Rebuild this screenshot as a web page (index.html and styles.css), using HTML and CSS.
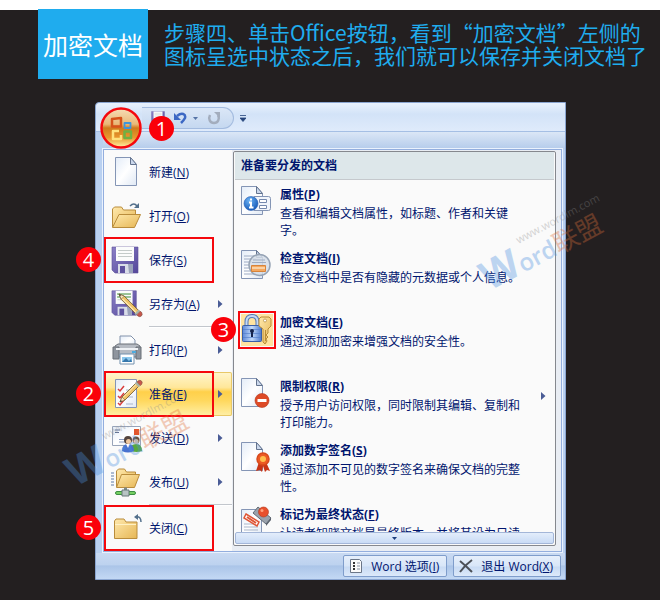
FILE: index.html
```html
<!DOCTYPE html>
<html lang="zh-CN">
<head>
    <meta charset="UTF-8">
    <meta name="viewport" content="width=device-width, initial-scale=1.0">
    <title>加密文档</title>
    <link rel="stylesheet" href="styles.css">
</head>

<body>
<!-- shared icon shapes -->
<svg class="defs" aria-hidden="true">
    <defs>
        <linearGradient id="paper" x1="0" y1="0" x2="1" y2="1">
            <stop offset="0" stop-color="#e3ecf8"/>
            <stop offset=".5" stop-color="#fff"/>
            <stop offset="1" stop-color="#dfe8f4"/>
        </linearGradient>
        <linearGradient id="folder" x1="0" y1="0" x2="1" y2="1">
            <stop offset="0" stop-color="#ffe9ad"/>
            <stop offset="1" stop-color="#e6b655"/>
        </linearGradient>
        <linearGradient id="purple" x1="0" y1="0" x2="1" y2="1">
            <stop offset="0" stop-color="#8b80c6"/>
            <stop offset="1" stop-color="#54479a"/>
        </linearGradient>
        <linearGradient id="lock" x1="0" y1="0" x2="1" y2="0">
            <stop offset="0" stop-color="#5c88d8"/>
            <stop offset=".5" stop-color="#c3dafa"/>
            <stop offset="1" stop-color="#4b78cc"/>
        </linearGradient>
        <linearGradient id="orb" x1="0" y1="0" x2="0" y2="1">
            <stop offset="0" stop-color="#f6dcb4"/>
            <stop offset=".4" stop-color="#e9b878"/>
            <stop offset=".5" stop-color="#cf7a1c"/>
            <stop offset=".75" stop-color="#e8962c"/>
            <stop offset="1" stop-color="#fff0a0"/>
        </linearGradient>
        <radialGradient id="info" cx=".4" cy=".3" r=".8">
            <stop offset="0" stop-color="#6db4f5"/>
            <stop offset="1" stop-color="#0b4eb0"/>
        </radialGradient>
        <symbol id="sheet" viewBox="0 0 32 32">
            <path d="M4.500 1.500h15l6 7v21h-21z" fill="url(#paper)" stroke="#8495b5"/>
            <path d="M19.500 1.500v7h6z" fill="#cbd8ec" stroke="#64748f" stroke-linejoin="round"/>
        </symbol>
        <symbol id="floppy" viewBox="0 0 32 32">
            <path d="M1 3h26v26H4l-3-3z" fill="url(#purple)" stroke="#5a4f98" stroke-width=".6"/>
            <path d="M5 3h18v14H5z" fill="#fbfcfb"/>
            <path d="M7 6.500h14M7 9.500h14M7 12.500h14" stroke="#c4cbc9"/>
            <path d="M7 20h15v9H7z" fill="#d9dde8"/>
            <path d="M9 22h5v7H9z" fill="#5e529f"/>
            <path d="M17 20h5v9h-4z" fill="#9aa2ba"/>
        </symbol>
        <symbol id="pencil" viewBox="0 0 24 24">
            <path d="M1 23l2-5L17.500 3.500l3 3L6 21z" fill="#f0c468" stroke="#6e5428" stroke-width=".8"/>
            <path d="M4 18.500L18 4.500" stroke="#fff0c0"/>
            <path d="M1 23l2-5 3 3z" fill="#f7e2bc" stroke="#6e5428" stroke-width=".5"/>
            <path d="M1 23l.8-2 1.200 1.200z" fill="#333"/>
            <path d="M19 2q2-1.500 3.500 0t0 3.500l-1 1-3.500-3.500z" fill="#c8574b" stroke="#7d4b40" stroke-width=".6"/>
            <path d="M16.500 3.500l4 4" stroke="#a9b7ae" stroke-width="1.800"/>
        </symbol>
        <symbol id="arrow" viewBox="0 0 5 8">
            <path d="M0 0l4.500 4L0 8z" fill="#4a5c96"/>
        </symbol>
    </defs>
</svg>

<div class="page">
    <header class="step">
        <h1 class="step-tag">加密文档</h1>
        <p class="step-text">步骤四、单击Office按钮，看到“加密文档”左侧的图标呈选中状态之后，我们就可以保存并关闭文档了</p>
    </header>

    <main class="window">
        <div class="titlebar">
            <button class="office" aria-label="Office">
                <svg viewBox="0 0 42 42">
                    <circle cx="21" cy="21" r="19" fill="url(#orb)"/>
                    <g fill="none" stroke-linejoin="round">
                        <path d="M12 12l9-1v8.500h-9z" stroke="#d6521a" stroke-width="2.500"/>
                        <path d="M24.500 16h6v5h-6z" stroke="#3f94dc" stroke-width="1.800"/>
                        <path d="M19 24h-6v8h8v-4" stroke="#ffe27c" stroke-width="2.500"/>
                        <path d="M24.500 24.500h6.500v6.500h-6.500z" stroke="#6fb043" stroke-width="2.500"/>
                    </g>
                    <circle cx="21" cy="21" r="19.500" fill="none" stroke="#f5080d" stroke-width="2.500"/>
                </svg>
            </button>
            <div class="quick">
                <button aria-label="保存"><svg width="16" height="16" viewBox="0 0 32 32"><use href="#floppy"/></svg></button>
                <button aria-label="撤消"><svg width="14" height="14" viewBox="0 0 14 14"><path d="M4 5c5-4 9-2 8 2-1 2-2 3-4 5" fill="none" stroke="#3c68c4" stroke-width="2.500"/><path d="M1 2v7h7z" fill="#3c68c4"/></svg></button>
                <button aria-label="撤消列表"><svg width="5" height="3" viewBox="0 0 5 3"><path d="M0 0h5L2.500 3z" fill="#5573a6"/></svg></button>
                <button aria-label="恢复"><svg width="14" height="14" viewBox="0 0 14 14"><path d="M3 4C1 8 3 12 7 12s6-4 4-8" fill="none" stroke="#a3adbd" stroke-width="2.500"/><path d="M7 1h6v6z" fill="#a3adbd"/></svg></button>
            </div>
            <button class="more" aria-label="自定义快速访问工具栏"><svg width="6" height="7" viewBox="0 0 6 7"><path d="M0 .5h6M0 3h6L3 6.500z" fill="#26457c" stroke="#26457c" stroke-width=".8"/></svg></button>
            <span class="mark mark-office">1</span>
        </div>
        <div class="ribbon"></div>

        <div class="body">
            <nav class="menu">
                <button class="menu-item">
                    <svg class="icon"><use href="#sheet"/></svg>
                    <span>新建(<u>N</u>)</span>
                </button>
                <button class="menu-item">
                    <svg class="icon" viewBox="0 0 32 32">
                        <path d="M1.500 27V9l2-2h7l2 3h12v5" fill="url(#folder)" stroke="#b98c3c"/>
                        <path d="M1.500 27.500L8 14.500h21.500l-6 13z" fill="url(#folder)" stroke="#b98c3c"/>
                        <path d="M19 6q4-4 7 0" fill="none" stroke="#53708c" stroke-width="1.500"/>
                        <path d="M28 3v5h-5z" fill="#53708c"/>
                    </svg>
                    <span>打开(<u>O</u>)</span>
                </button>
                <button class="menu-item boxed">
                    <svg class="icon"><use href="#floppy"/></svg>
                    <span>保存(<u>S</u>)</span>
                    <span class="mark mark-side">4</span>
                </button>
                <button class="menu-item">
                    <svg class="icon" viewBox="0 0 32 32">
                        <use href="#floppy" width="30" height="30"/>
                        <path d="M6 6h14M6 9h14" stroke="#55a34c"/>
                        <g transform="matrix(1 0 0 -1 0 32)"><use href="#pencil" x="7" y="2" width="25" height="25"/></g>
                    </svg>
                    <span>另存为(<u>A</u>)</span>
                    <svg class="arrow"><use href="#arrow"/></svg>
                </button>
                <hr>
                <button class="menu-item">
                    <svg class="icon" viewBox="0 0 32 32">
                        <path d="M9 12V2h11l4 4v7z" fill="url(#paper)" stroke="#8292ab"/>
                        <path d="M4 12l3-2h19l3 2v11H4z" fill="#b6bbc3" stroke="#6a7079"/>
                        <path d="M2 13h6v12H2zM25 13h5v12h-5z" fill="#8f959e" stroke="#686e77"/>
                        <path d="M5 15h22" stroke="#eef1f5" stroke-width="2"/>
                        <path d="M21 18h4" stroke="#4caadd" stroke-width="2"/>
                        <path d="M9 20h14v10H9z" fill="#fff" stroke="#7390ad"/>
                        <path d="M11 23h10v5H11z" fill="#8cc8ed"/>
                        <path d="M11 28l4-4 3 3 2-2 1 3z" fill="#3677ac"/>
                    </svg>
                    <span>打印(<u>P</u>)</span>
                    <svg class="arrow"><use href="#arrow"/></svg>
                </button>
                <button class="menu-item active boxed">
                    <svg class="icon" viewBox="0 0 32 32">
                        <path d="M4.500 1.500h21v28h-21z" fill="url(#paper)" stroke="#8495b5"/>
                        <path d="M7 11l2 2 4-5M7 18l2 2 4-5M7 25l2 2 4-5" fill="none" stroke="#d83c3c" stroke-width="1.500"/>
                        <path d="M15 12h7M15 19h7M15 26h7" stroke="#a9b5c9"/>
                        <use href="#pencil" x="8" y="1" width="24" height="24"/>
                    </svg>
                    <span>准备(<u>E</u>)</span>
                    <svg class="arrow"><use href="#arrow"/></svg>
                    <span class="mark mark-side">2</span>
                </button>
                <button class="menu-item">
                    <svg class="icon" viewBox="0 0 32 32">
                        <path d="M1.500 4.500h28v19h-28z" fill="url(#paper)" stroke="#98a4b9"/>
                        <path d="M4 8h5M4 10.500h4" stroke="#5c6f96"/>
                        <path d="M8 17.500h9M8 20h7" stroke="#8b9cc0"/>
                        <path d="M23 7h5v6h-5z" fill="#e2552d"/>
                        <circle cx="25" cy="18" r="3.500" fill="#6b5140"/>
                        <circle cx="25" cy="19.500" r="2.500" fill="#f0c9a0"/>
                        <path d="M20 29q-1-7 5-7t6 7q-5 2-11 0z" fill="#58a83e"/>
                        <circle cx="17" cy="18" r="4" fill="#54453f"/>
                        <circle cx="17.500" cy="19.500" r="2.500" fill="#f0c9a0"/>
                        <path d="M11 29q0-7 6-7t6 7q-6 3-12 0z" fill="#4872cf"/>
                        <path d="M15 22l2 4 2-4z" fill="#fff"/>
                    </svg>
                    <span>发送(<u>D</u>)</span>
                    <svg class="arrow"><use href="#arrow"/></svg>
                </button>
                <button class="menu-item">
                    <svg class="icon" viewBox="0 0 32 32">
                        <path d="M0 7h3M0 10h3M0 13h3M0 16h3M0 19h3" stroke="#5f7aa8"/>
                        <path d="M5.500 21V5l2-2h6l2 3h9v5" fill="url(#folder)" stroke="#b98c3c"/>
                        <path d="M5.500 21.500l5-13h18l-5 13z" fill="url(#folder)" stroke="#b98c3c"/>
                        <path d="M14.500 21.500v5" stroke="#7e8b88" stroke-width="3"/>
                        <rect x="4.500" y="25.500" width="20" height="3" rx="1.500" fill="#75cf62" stroke="#3c8d42"/>
                        <path d="M11 24h7v6h-7z" fill="#b8c4c4" stroke="#68797a"/>
                    </svg>
                    <span>发布(<u>U</u>)</span>
                    <svg class="arrow"><use href="#arrow"/></svg>
                </button>
                <hr>
                <button class="menu-item boxed">
                    <svg class="icon" viewBox="0 0 32 32">
                        <path d="M3.500 26.500V9l1.500-2h8l2 3h11v16.500z" fill="url(#folder)" stroke="#b98c3c"/>
                        <path d="M4 12.500h21" stroke="#fff1c4"/>
                        <path d="M25 5q5-1 5 5" fill="none" stroke="#53708c" stroke-width="1.500"/>
                        <path d="M23 5l4-3v6z" fill="#53708c"/>
                    </svg>
                    <span>关闭(<u>C</u>)</span>
                    <span class="mark mark-side">5</span>
                </button>
            </nav>

            <section class="pane">
                <h2>准备要分发的文档</h2>
                <div class="pane-list">
                    <button class="task">
                        <svg class="icon" viewBox="0 0 32 32">
                            <path d="M.5.500h15l6 7v21H.5z" fill="url(#paper)" stroke="#8495b5"/>
                            <path d="M15.500.500v7h6z" fill="#cbd8ec" stroke="#64748f"/>
                            <path d="M13 10.500h14.500q2 0 2 2v10q0 2-2 2H13z" fill="#f1f5fb" stroke="#8495b5"/>
                            <path d="M18.500 13.500h7v3h-7zM18.500 19.500h7v3h-7z" fill="#fff" stroke="#7488ad"/>
                            <circle cx="10" cy="17.500" r="7" fill="url(#info)" stroke="#2b62b5" stroke-width=".6"/>
                            <path d="M10 12.500v2M8 16.500h2v5M8 21.500h4.500" fill="none" stroke="#fff" stroke-width="2"/>
                        </svg>
                        <span class="task-text">
                            <strong>属性(<u>P</u>)</strong>
                            <span>查看和编辑文档属性，如标题、作者和关键字。</span>
                        </span>
                    </button>
                    <button class="task">
                        <svg class="icon" viewBox="0 0 32 32">
                            <path d="M.5.500h15l6 7v21H.5z" fill="url(#paper)" stroke="#8495b5"/>
                            <path d="M15.500.500v7h6z" fill="#cbd8ec" stroke="#64748f"/>
                            <path d="M3 6h10M3 9h12M3 12h8M3 15h6M3 18h6M3 21h6M3 24h10" stroke="#9caac4"/>
                            <circle cx="18.500" cy="15" r="10.500" fill="#d5dde8" fill-opacity=".85" stroke="#97a4b5" stroke-width="1.500"/>
                            <path d="M12 10h12M11 12.500h14" stroke="#a0adc2"/>
                            <path d="M10.500 15.500h14v6h-14z" fill="#f4a860" stroke="#d8843a"/>
                            <path d="M11 18h13" stroke="#fde0bc" stroke-width="1.500"/>
                        </svg>
                        <span class="task-text">
                            <strong>检查文档(<u>I</u>)</strong>
                            <span>检查文档中是否有隐藏的元数据或个人信息。</span>
                        </span>
                    </button>
                    <button class="task selected">
                        <svg class="icon" viewBox="0 0 32 32">
                            <path d="M5.500 13V8q0-6 5.500-6t5.500 6v5" fill="none" stroke="#5478b4" stroke-width="4"/>
                            <path d="M5.500 13V8q0-6 5.500-6t5.500 6v5" fill="none" stroke="#c5d9f4" stroke-width="2"/>
                            <rect x="1.500" y="11.500" width="19" height="16" rx="1" fill="url(#lock)" stroke="#3a5fa8"/>
                            <path d="M2 15.500h18M2 19.500h18M2 23.500h18" stroke="#4d7ac8" opacity=".6"/>
                            <circle cx="11" cy="17" r="2" fill="#15234c"/>
                            <path d="M11 17v6" stroke="#15234c" stroke-width="2"/>
                            <path d="M18 5l2-2h8l2 2v7l-3 3v4l-2 2 2 2-2 2 1 2-2 3-2-2V15l-4-3z" fill="url(#folder)" stroke="#b88c36"/>
                            <path d="M24.500 16v11" stroke="#b88c36"/>
                            <circle cx="24" cy="6.500" r="1.500" fill="#fff" stroke="#a47a2a" stroke-width=".6"/>
                        </svg>
                        <span class="task-text">
                            <strong>加密文档(<u>E</u>)</strong>
                            <span>通过添加加密来增强文档的安全性。</span>
                        </span>
                    </button>
                    <button class="task">
                        <svg class="icon" viewBox="0 0 32 32">
                            <path d="M.5.500h15l6 7v21H.5z" fill="url(#paper)" stroke="#8495b5"/>
                            <path d="M15.500.500v7h6z" fill="#cbd8ec" stroke="#64748f"/>
                            <circle cx="21" cy="22.500" r="7" fill="#dd4a26" stroke="#b5381c" stroke-width=".6"/>
                            <path d="M16.500 22.500h9" stroke="#fff" stroke-width="3"/>
                        </svg>
                        <span class="task-text">
                            <strong>限制权限(<u>R</u>)</strong>
                            <span>授予用户访问权限，同时限制其编辑、复制和打印能力。</span>
                        </span>
                        <svg class="arrow"><use href="#arrow"/></svg>
                    </button>
                    <button class="task">
                        <svg class="icon" viewBox="0 0 32 32">
                            <path d="M.5.500h15l6 7v21H.5z" fill="url(#paper)" stroke="#8495b5"/>
                            <path d="M15.500.500v7h6z" fill="#cbd8ec" stroke="#64748f"/>
                            <path d="M18 20l-3 9 4-1 2 2 1-6 2 6 2-2 3 1-4-9z" fill="#c93516"/>
                            <circle cx="22" cy="17" r="6" fill="#ec5a24" stroke="#d84a1c" stroke-width="1.500"/>
                            <circle cx="22" cy="17" r="3" fill="#ffbe4c"/>
                        </svg>
                        <span class="task-text">
                            <strong>添加数字签名(<u>S</u>)</strong>
                            <span>通过添加不可见的数字签名来确保文档的完整性。</span>
                        </span>
                    </button>
                    <button class="task">
                        <svg class="icon" viewBox="0 0 32 32">
                            <path d="M.5 3.500h20v27H.5z" fill="url(#paper)" stroke="#8495b5"/>
                            <path d="M3 18h14M3 21h14M3 24h14" stroke="#a9b5c9"/>
                            <path d="M5 8l13 8-2 4L3 12z" fill="#fff" stroke="#df5535" stroke-width="1.500"/>
                            <path d="M6 11l9 6" stroke="#df5535" stroke-width="2"/>
                            <path d="M12 7l5-6 13 11-5 6z" fill="#9aa2ac" stroke="#626a75"/>
                            <path d="M25 18l5-6v2l-5 6z" fill="#555d68"/>
                            <circle cx="22.500" cy="6" r="5" fill="#e8502c" stroke="#b23518" stroke-width=".6"/>
                            <circle cx="21" cy="4.500" r="1.500" fill="#ffa17c"/>
                        </svg>
                        <span class="task-text">
                            <strong>标记为最终状态(<u>F</u>)</strong>
                            <span>让读者知晓文档是最终版本，并将其设为只读</span>
                        </span>
                    </button>
                </div>
                <button class="scroll" aria-label="向下滚动"><svg width="5" height="3" viewBox="0 0 5 3"><path d="M0 0h5L2.500 3z" fill="#1c3f7e"/></svg></button>
                <span class="mark mark-pane">3</span>
            </section>
        </div>

        <footer class="actions">
            <button class="action">
                <svg width="16" height="16" viewBox="0 0 16 16">
                    <path d="M2.500 1.500h9l2 2v11h-11z" fill="#fafafa" stroke="#6b7688"/>
                    <path d="M5 5h2M5 8h2M5 11h2" stroke="#333" stroke-width="2"/>
                    <path d="M9 5h3M9 8h3M9 11h3" stroke="#8a94a5"/>
                </svg>
                <span>Word 选项(<u>I</u>)</span>
            </button>
            <button class="action">
                <svg width="16" height="16" viewBox="0 0 16 16"><path d="M2 3q6 5 12 11M14 2Q7 7 2 14" fill="none" stroke="#4c5057" stroke-width="2"/></svg>
                <span>退出 Word(<u>X</u>)</span>
            </button>
        </footer>

        <div class="watermark watermark-right" aria-hidden="true">
            <small>www.wordlm.com</small>
            <b>W</b><i>ord</i><em>联盟</em>
        </div>
        <div class="watermark watermark-left" aria-hidden="true">
            <small>www.wordlm.com</small>
            <b>W</b><i>ord</i><em>联盟</em>
        </div>
    </main>
</div>
</body>
</html>
```

FILE: styles.css
```css
* {
    box-sizing: border-box;
    margin: 0;
    padding: 0;
}

body {
    background: #231f20;
    font-family: "Open Sans", "Noto Sans CJK SC", sans-serif;
    font-size: 12px;
    color: #00156e;
}

button {
    border: none;
    background: none;
    font: inherit;
    color: inherit;
    text-align: left;
}

svg {
    display: block;
    flex: none;
}

u {
    text-underline-offset: 1px;
}

.defs {
    position: absolute;
    width: 0;
    height: 0;
}

.page {
    border-top: 10px solid #fff;
}

/* step heading */

.step {
    display: flex;
    gap: 16px;
    margin-top: -1px;
    padding: 0 8px 0 38px;
    font-family: "Noto Sans CJK SC", sans-serif;
}

.step-tag {
    flex: none;
    width: 110px;
    line-height: 70px;
    background: #1facee;
    color: #fff;
    font-size: 25px;
    font-weight: 400;
    text-align: center;
}

.step-text {
    padding-top: 12px;
    color: #1facee;
    font-size: 21px;
    line-height: 23px;
}

/* window */

.window {
    position: relative;
    margin: 23px 94px 0 95px;
    border: 1px solid #8aa5d0;
    border-radius: 4px 0 0 0;
    background: #b9d0f0;
}

.titlebar {
    position: relative;
    display: flex;
    align-items: center;
    gap: 6px;
    height: 29px;
    padding: 2px 0 0 46px;
    border-bottom: 1px solid #a5bfe4;
    border-radius: 4px 0 0 0;
    background: linear-gradient(#e9f2fd, #d3e3f8 40%, #dfebfb);
}

.quick {
    display: flex;
    align-items: center;
    gap: 6px;
    height: 22px;
    padding: 0 12px 0 9px;
    border: 1px solid #a3bbdf;
    border-left: none;
    border-radius: 0 11px 11px 0;
    background: linear-gradient(#dbe7f7, #c5d8f0);
}

.quick button:last-child {
    margin-left: 3px;
}

.office {
    position: absolute;
    z-index: 1;
    top: 4px;
    left: 4px;
    width: 42px;
    height: 42px;
    border-radius: 50%;
}

.ribbon {
    height: 17px;
    margin-left: 7px;
    background: linear-gradient(#dbe7f6, #b4cbeb);
}

.body {
    display: flex;
    margin: 0 3px 0 7px;
    border: 1px solid #93aede;
    box-shadow: 0 0 0 1px #eaf2fd;
    background: #e9edf3;
}

/* left menu */

.menu {
    flex: none;
    width: 128px;
    background: #fafafa;
}

.menu hr {
    height: 2px;
    margin-left: 45px;
    border: none;
    border-top: 1px solid #c2c6cc;
    background: #fff;
}

.menu-item {
    position: relative;
    display: flex;
    align-items: center;
    gap: 6px;
    width: 100%;
    height: 44px;
    padding: 0 9px 0 7px;
}

.menu-item.active {
    border-radius: 2px;
    background: linear-gradient(#fff6cf, #ffe79a 35%, #ffd04a 45%, #ffd85e 65%, #fff0a8);
    box-shadow: inset 0 0 0 1px #e8c868;
}

.icon {
    width: 32px;
    height: 32px;
}

.arrow {
    width: 5px;
    height: 8px;
    margin-left: auto;
}

/* red highlights and step numbers */

.boxed::after {
    content: "";
    position: absolute;
    inset: -1px 18px -1px 0;
    border: 2px solid #f5080d;
}

.mark {
    position: absolute;
    z-index: 2;
    width: 25px;
    height: 25px;
    border-radius: 50%;
    background: #fa0009;
    color: #fff;
    font-size: 20px;
    line-height: 25px;
    text-align: center;
}

.mark-office {
    top: 13px;
    left: 53px;
}

.mark-side {
    top: 9px;
    left: -28px;
}

.mark-pane {
    top: 165px;
    left: -23px;
}

/* right pane */

.pane {
    position: relative;
    flex: 1;
    min-width: 0;
    margin: 1px 5px 5px 1px;
    padding: 0 1px 1px;
    border: 1px solid #85888e;
    border-radius: 2px;
    background: #fafafa;
}

.pane h2 {
    padding: 0 6px;
    border-bottom: 1px solid #c5c9cd;
    background: #dde7ea;
    font-size: 12px;
    line-height: 27px;
}

.pane-list {
    max-height: 352px;
    padding-top: 6px;
    overflow: hidden;
}

.task {
    display: flex;
    gap: 7px;
    width: 100%;
    height: 64px;
    padding: 0 8px 0 6px;
}

.task-text {
    flex: 1;
    max-width: 247px;
    line-height: 17px;
}

.task-text strong {
    display: block;
    margin-bottom: 2px;
}

.task .arrow {
    margin-top: 14px;
}

.selected .icon {
    background: #ffe3a0;
    outline: 2px solid #f5080d;
    outline-offset: 1px;
}

.scroll {
    display: flex;
    align-items: center;
    justify-content: center;
    width: 100%;
    height: 12px;
    border: 1px solid #a3b6d8;
    border-radius: 2px;
    background: linear-gradient(#e3edfb, #c9dbf5);
}

/* bottom buttons */

.actions {
    display: flex;
    justify-content: flex-end;
    gap: 6px;
    margin-top: 1px;
    padding: 2px 4px;
    background: linear-gradient(#c9daf2, #bdd2ef 45%, #abc5e8 50%, #c3d8f4);
}

.action {
    display: flex;
    align-items: center;
    gap: 7px;
    height: 22px;
    padding: 0 7px 0 4px;
    border: 1px solid #7f9dcb;
    border-radius: 2px;
    background: linear-gradient(#e6effb, #d8e6f8 50%, #c9dbf4 55%, #dce9fa);
    white-space: nowrap;
}

/* site watermark */

.watermark {
    position: absolute;
    z-index: 3;
    display: flex;
    align-items: baseline;
    line-height: 40px;
    opacity: .35;
    pointer-events: none;
    transform: rotate(-28deg);
}

.watermark small {
    position: absolute;
    top: -4px;
    left: 48px;
    color: #8a8a8a;
    font-size: 11px;
    line-height: 14px;
}

.watermark b {
    color: #4b8fe0;
    font-size: 40px;
}

.watermark i {
    color: #4b8fe0;
    font-size: 24px;
    font-style: normal;
    font-weight: 600;
}

.watermark em {
    color: #e0703a;
    font-size: 26px;
    font-style: normal;
    font-weight: 400;
}

.watermark-right {
    top: 124px;
    right: -42px;
}

.watermark-left {
    top: 320px;
    left: -34px;
}
```
